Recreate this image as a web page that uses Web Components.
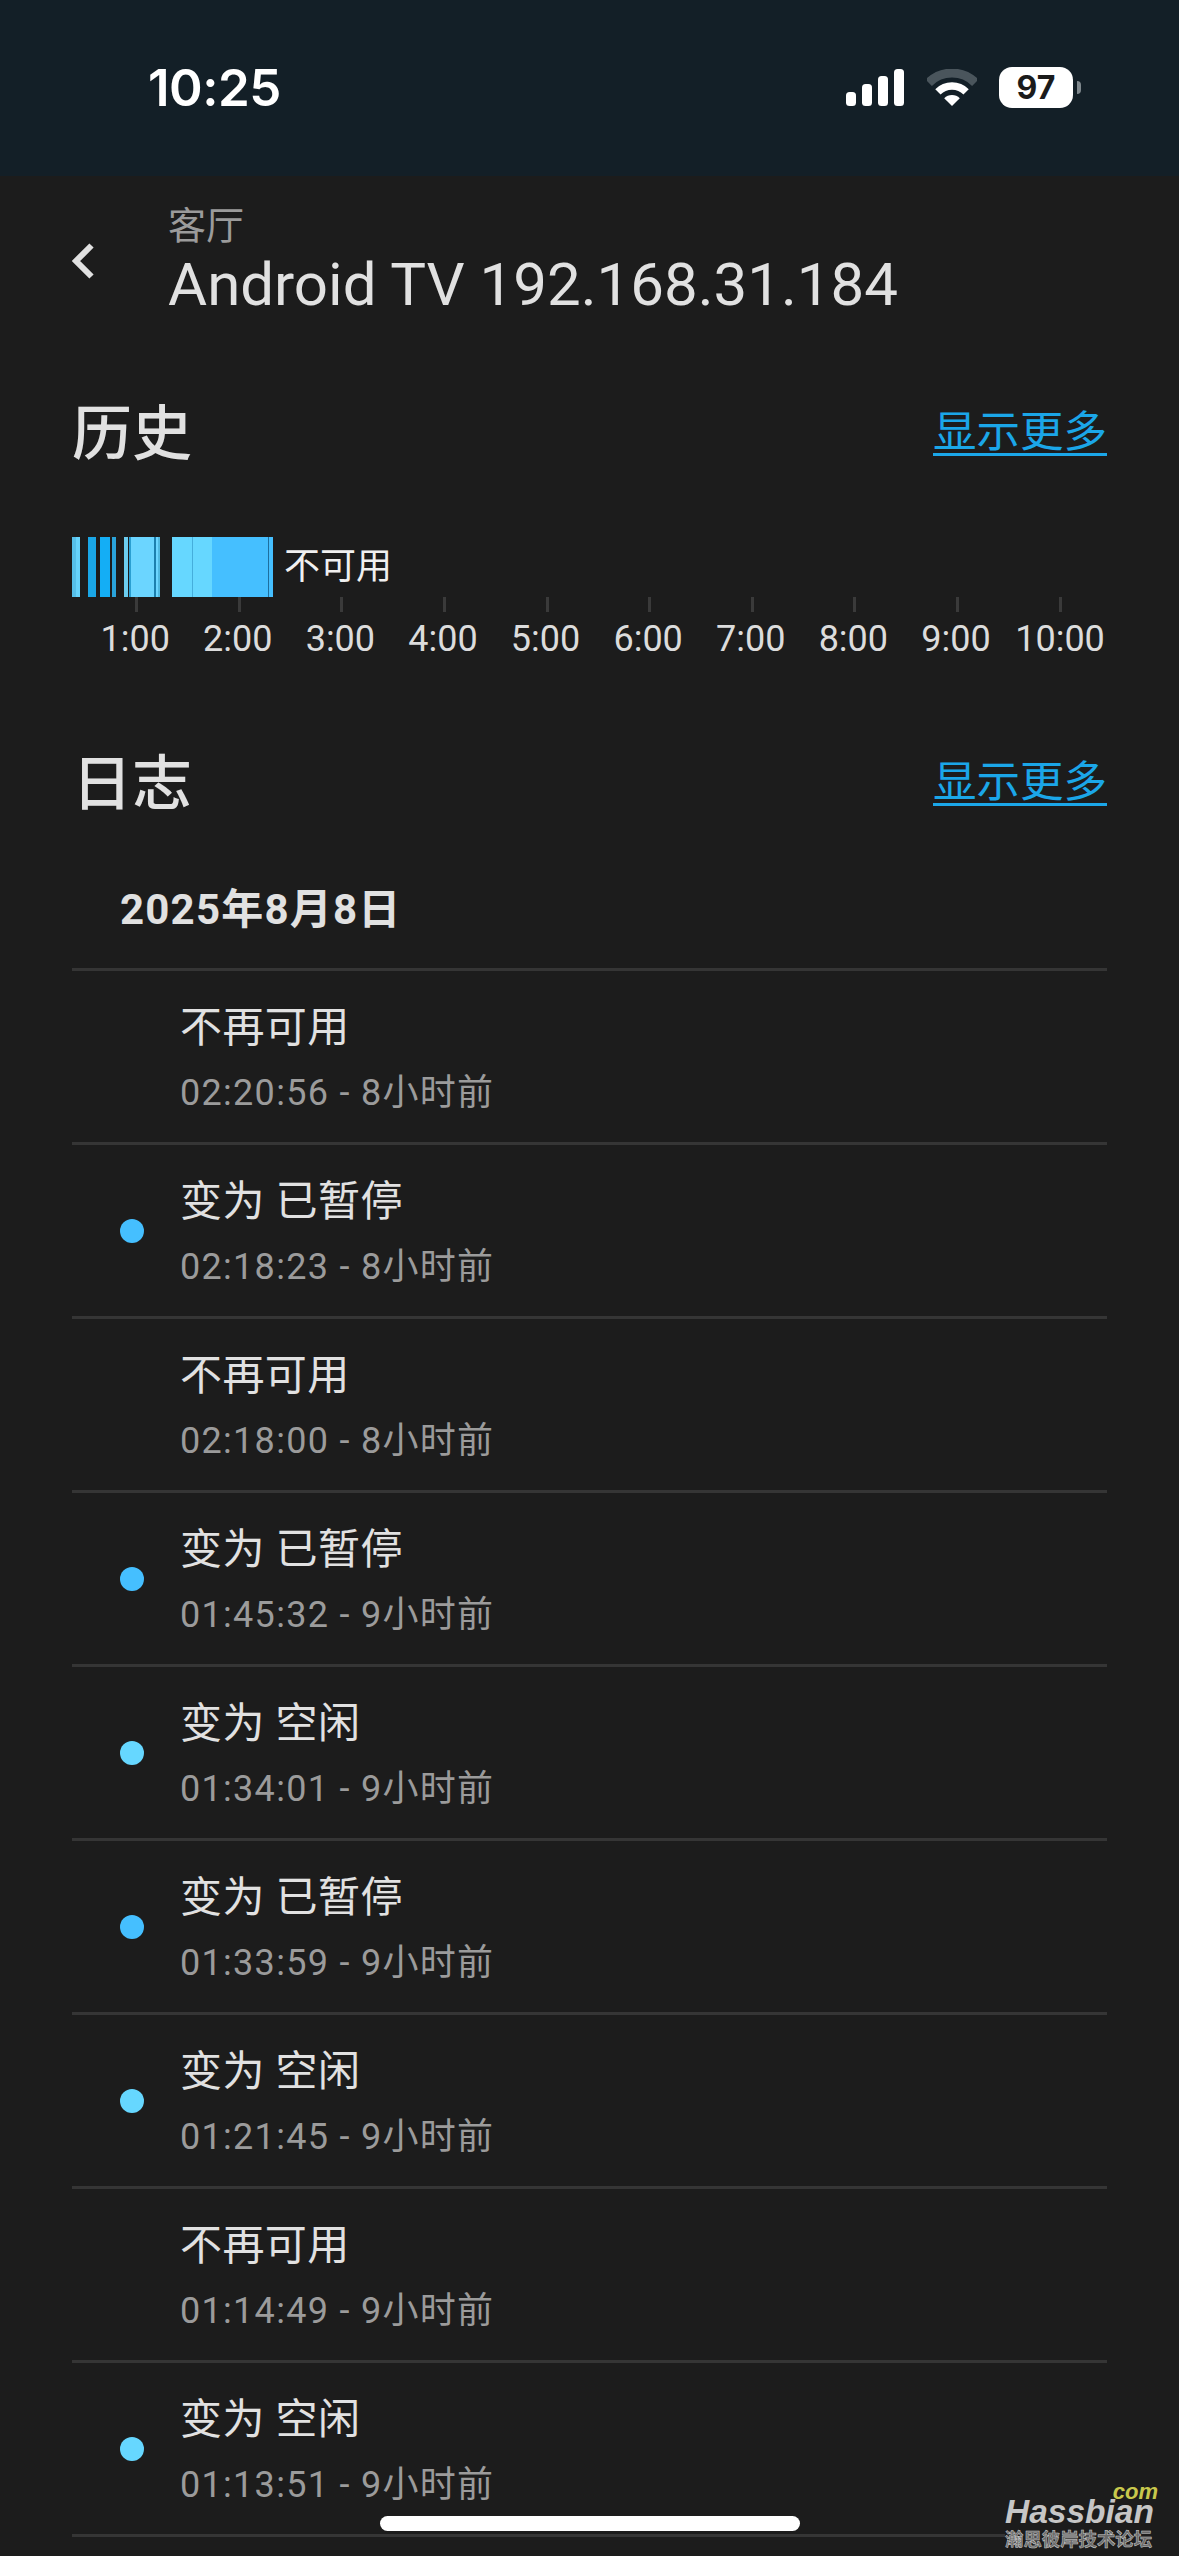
<!DOCTYPE html>
<html lang="zh">
<head>
<meta charset="utf-8">
<title>Android TV 192.168.31.184</title>
<style>
  html, body {
    margin: 0;
    background: #1c1c1c;
  }
  body {
    position: relative;
    width: 1179px;
    height: 2556px;
    overflow: hidden;
    color: #e1e1e1;
    font-family: Roboto, "Noto Sans CJK SC", sans-serif;
  }
</style>
</head>
<body>
<status-bar time="10:25" battery="97"></status-bar>
<entity-header area="客厅">Android TV 192.168.31.184</entity-header>
<section-head>历史</section-head>
<history-chart label="不可用"></history-chart>
<section-head class="logbook">日志</section-head>
<log-date>2025年8月8日</log-date>
<log-list>
  <log-row data-when="02:20:56 - 8小时前">不再可用</log-row>
  <log-row data-when="02:18:23 - 8小时前" data-dot="#45bfff">变为 已暂停</log-row>
  <log-row data-when="02:18:00 - 8小时前">不再可用</log-row>
  <log-row data-when="01:45:32 - 9小时前" data-dot="#45bfff">变为 已暂停</log-row>
  <log-row data-when="01:34:01 - 9小时前" data-dot="#66d7ff">变为 空闲</log-row>
  <log-row data-when="01:33:59 - 9小时前" data-dot="#45bfff">变为 已暂停</log-row>
  <log-row data-when="01:21:45 - 9小时前" data-dot="#66d7ff">变为 空闲</log-row>
  <log-row data-when="01:14:49 - 9小时前">不再可用</log-row>
  <log-row data-when="01:13:51 - 9小时前" data-dot="#66d7ff">变为 空闲</log-row>
</log-list>
<home-bar></home-bar>
<forum-mark></forum-mark>

<script>
const statusbarhtml = `
<style>
  :host {
    display: flex;
    align-items: flex-start;
    justify-content: space-between;
    box-sizing: border-box;
    height: 176px;
    padding: 58px 98px 0 148px;
    background: #131f27;
    color: #fff;
  }
  .time {
    font: 600 51px/60px Inter, Roboto, sans-serif;
    letter-spacing: -0.5px;
  }
  .icons {
    display: flex;
    align-items: flex-end;
    height: 41px;
    margin-top: 9px;
  }
  .signal {
    display: flex;
    align-items: flex-end;
    gap: 6px;
    margin: 0 23px 2px 0;
  }
  .signal span {
    width: 10px;
    border-radius: 3.5px;
    background: #fff;
  }
  svg {
    display: block;
    margin: 0 22px 2px 0;
  }
  .battery {
    display: flex;
    align-items: center;
    justify-content: center;
    width: 74px;
    height: 41px;
    border-radius: 13px;
    background: #fff;
    color: #1b1b1b;
    font: 700 32px/41px Inter, Roboto, sans-serif;
  }
  .nub {
    width: 4px;
    height: 13px;
    margin: 0 0 14px 4px;
    border-radius: 0 7px 7px 0;
    background: #7f888d;
  }
</style>
<div class="time"></div>
<div class="icons">
  <div class="signal">
    <span style="height: 14px"></span>
    <span style="height: 22px"></span>
    <span style="height: 30px"></span>
    <span style="height: 37px"></span>
  </div>
  <svg width="50" height="37" viewBox="0 0 50 37">
    <path d="M1.7 13.7A33 33 0 0 1 48.3 13.7" fill="none" stroke="#4a555c" stroke-width="9"/>
    <path d="M10.9 22.9A20 20 0 0 1 39.1 22.9" fill="none" stroke="#fff" stroke-width="7.5"/>
    <path d="M25 37L17.2 29.2A11 11 0 0 1 32.8 29.2Z" fill="#fff"/>
  </svg>
  <div class="battery"></div>
  <div class="nub"></div>
</div>
`;

customElements.define('status-bar',
    class extends HTMLElement {
        constructor() {
            super();
            this.attachShadow({ mode: 'open' });
            this.shadowRoot.innerHTML = statusbarhtml;
        }

        connectedCallback() {
            this.shadowRoot.querySelector('.time').textContent = this.getAttribute('time');
            this.shadowRoot.querySelector('.battery').textContent = this.getAttribute('battery');
        }
    });

const entityheaderhtml = `
<style>
  :host {
    display: flex;
    box-sizing: border-box;
    height: 176px;
    padding: 26px 0 0 71px;
  }
  svg {
    display: block;
    flex: none;
    margin: 41px 73px 0 0;
  }
  .area {
    color: #9b9b9b;
    font-size: 38px;
    line-height: 48px;
  }
  .name {
    color: #e1e1e1;
    font-size: 60px;
    line-height: 70px;
    white-space: nowrap;
  }
</style>
<svg width="24" height="36" viewBox="0 0 24 36">
  <path d="M20.5 2.5L5 18L20.5 33.5" fill="none" stroke="#e1e1e1" stroke-width="6"/>
</svg>
<div>
  <div class="area"></div>
  <div class="name"><slot></slot></div>
</div>
`;

customElements.define('entity-header',
    class extends HTMLElement {
        constructor() {
            super();
            this.attachShadow({ mode: 'open' });
            this.shadowRoot.innerHTML = entityheaderhtml;
        }

        connectedCallback() {
            this.shadowRoot.querySelector('.area').textContent = this.getAttribute('area');
        }
    });

const sectionheadhtml = `
<style>
  :host {
    display: flex;
    align-items: center;
    justify-content: space-between;
    box-sizing: border-box;
    height: 164px;
    padding: 0 72px;
  }
  :host(.logbook) {
    margin-top: 22px;
  }
  .title {
    margin-top: 2px;
    font-size: 60px;
    font-weight: 500;
    line-height: 72px;
    color: #e1e1e1;
  }
  a {
    margin-bottom: 2px;
    color: #1ba6e8;
    font-size: 43.5px;
    line-height: 52px;
    text-decoration: underline;
    text-decoration-thickness: 3px;
    text-underline-offset: 6px;
  }
</style>
<div class="title"><slot></slot></div>
<a href="#">显示更多</a>
`;

customElements.define('section-head',
    class extends HTMLElement {
        constructor() {
            super();
            this.attachShadow({ mode: 'open' });
            this.shadowRoot.innerHTML = sectionheadhtml;
        }
    });

// width and colour of each stretch of the timeline, in px from the left edge
const timeline = [
    [4, '#55bfe9'], [4, '#66d3fb'], [8, 'none'], [8, '#1aa6e6'], [3.5, 'none'],
    [10.5, '#14aef5'], [2, 'none'], [4, '#2aa3da'], [8, 'none'], [4, '#6ccdf0'],
    [1, 'none'], [2, '#2b9fd2'], [23, '#6bd5ff'], [2, '#1c7fae'], [2, '#6bd5ff'], [2, '#4fb8e0'],
    [12, 'none'], [20, '#66d7ff'], [1, '#45aedc'], [19, '#66d7ff'], [56, '#45bfff'],
    [1, '#1d6f9e'], [4, '#45bfff']
];
const hours = ['1:00', '2:00', '3:00', '4:00', '5:00', '6:00', '7:00', '8:00', '9:00', '10:00'];

const historycharthtml = `
<style>
  :host {
    display: block;
    padding: 21px 0 0 72px;
    height: 164px;
    box-sizing: border-box;
  }
  .line {
    display: flex;
    align-items: center;
    height: 60px;
  }
  .bars {
    display: flex;
    height: 60px;
  }
  .label {
    margin-left: 11px;
    color: #f0f0f0;
    font-size: 36px;
    line-height: 44px;
  }
  .axis {
    display: grid;
    grid-template-columns: repeat(10, 102.6px);
    margin-left: 13.4px;
  }
  .hour {
    display: flex;
    flex-direction: column;
    align-items: center;
    color: #dcdcdc;
    font-size: 36px;
    line-height: 40px;
  }
  .tick {
    width: 3px;
    height: 15px;
    margin-bottom: 7px;
    background: #3a3a3a;
  }
  .text {
    padding-right: 3px;
  }
  .hour:last-child .text {
    padding-right: 0;
  }
</style>
<div class="line">
  <div class="bars"></div>
  <div class="label"></div>
</div>
<div class="axis"></div>
`;

customElements.define('history-chart',
    class extends HTMLElement {
        constructor() {
            super();
            this.attachShadow({ mode: 'open' });
            this.shadowRoot.innerHTML = historycharthtml;

            const bars = this.shadowRoot.querySelector('.bars');
            timeline.forEach(([width, colour]) => {
                const bar = document.createElement('span');
                bar.style.width = `${width}px`;
                bar.style.background = colour;
                bars.appendChild(bar);
            });

            const axis = this.shadowRoot.querySelector('.axis');
            hours.forEach((hour) => {
                const cell = document.createElement('div');
                cell.className = 'hour';
                cell.innerHTML = `<span class="tick"></span><span class="text">${hour}</span>`;
                axis.appendChild(cell);
            });
        }

        connectedCallback() {
            this.shadowRoot.querySelector('.label').textContent = this.getAttribute('label');
        }
    });

const logdatehtml = `
<style>
  :host {
    display: flex;
    align-items: center;
    box-sizing: border-box;
    height: 102px;
    padding: 0 0 14px 120px;
    color: #e1e1e1;
    font-size: 42px;
    font-weight: 700;
    line-height: 50px;
    letter-spacing: 1.2px;
  }
</style>
<slot></slot>
`;

customElements.define('log-date',
    class extends HTMLElement {
        constructor() {
            super();
            this.attachShadow({ mode: 'open' });
            this.shadowRoot.innerHTML = logdatehtml;
        }
    });

const logrowhtml = `
<style>
  :host {
    display: flex;
    align-items: center;
    box-sizing: border-box;
    height: 174px;
    border-top: 3px solid #353535;
  }
  .dot {
    flex: none;
    width: 24px;
    height: 24px;
    margin: 0 36px 0 48px;
    border-radius: 50%;
  }
  .lines {
    padding-top: 3px;
  }
  .state {
    color: #e1e1e1;
    font-size: 42px;
    line-height: 56px;
    letter-spacing: 0.4px;
  }
  .when {
    margin-top: 13px;
    color: #9b9b9b;
    font-size: 36px;
    line-height: 48px;
    letter-spacing: 1.3px;
  }
</style>
<span class="dot"></span>
<div class="lines">
  <div class="state"><slot></slot></div>
  <div class="when"></div>
</div>
`;

customElements.define('log-row',
    class extends HTMLElement {
        constructor() {
            super();
            this.attachShadow({ mode: 'open' });
            this.shadowRoot.innerHTML = logrowhtml;
        }

        connectedCallback() {
            this.shadowRoot.querySelector('.dot').style.background = this.dataset.dot || 'transparent';
            this.shadowRoot.querySelector('.when').textContent = this.dataset.when;
        }
    });

const loglisthtml = `
<style>
  :host {
    display: block;
    margin: 0 72px;
    border-bottom: 3px solid #353535;
  }
</style>
<slot></slot>
`;

customElements.define('log-list',
    class extends HTMLElement {
        constructor() {
            super();
            this.attachShadow({ mode: 'open' });
            this.shadowRoot.innerHTML = loglisthtml;
        }
    });

const homebarhtml = `
<style>
  :host {
    display: block;
    position: absolute;
    left: 380px;
    top: 2516px;
    width: 420px;
    height: 15px;
    border-radius: 8px;
    background: #fff;
  }
</style>
`;

customElements.define('home-bar',
    class extends HTMLElement {
        constructor() {
            super();
            this.attachShadow({ mode: 'open' });
            this.shadowRoot.innerHTML = homebarhtml;
        }
    });

const forummarkhtml = `
<style>
  :host {
    display: block;
    position: absolute;
    left: 1005px;
    top: 2485px;
    width: 158px;
    height: 65px;
    background: #1c1c1c;
  }
  .com {
    position: absolute;
    right: 5px;
    top: 0;
    color: #c8c84c;
    font: italic 700 22px/14px "Liberation Sans", sans-serif;
  }
  .name {
    position: absolute;
    left: 0;
    top: 14px;
    color: #c6c6c6;
    font: italic 700 33.5px/26px "Liberation Sans", sans-serif;
  }
  .cn {
    position: absolute;
    left: 0;
    top: 43px;
    color: #6a6a6a;
    font: 700 18.4px/20px "Noto Sans CJK SC", sans-serif;
    -webkit-text-stroke: 0.5px #cfcfcf;
    white-space: nowrap;
  }
</style>
<span class="com">com</span>
<span class="name">Hassbian</span>
<span class="cn">瀚思彼岸技术论坛</span>
`;

customElements.define('forum-mark',
    class extends HTMLElement {
        constructor() {
            super();
            this.attachShadow({ mode: 'open' });
            this.shadowRoot.innerHTML = forummarkhtml;
        }
    });
</script>
</body>
</html>
